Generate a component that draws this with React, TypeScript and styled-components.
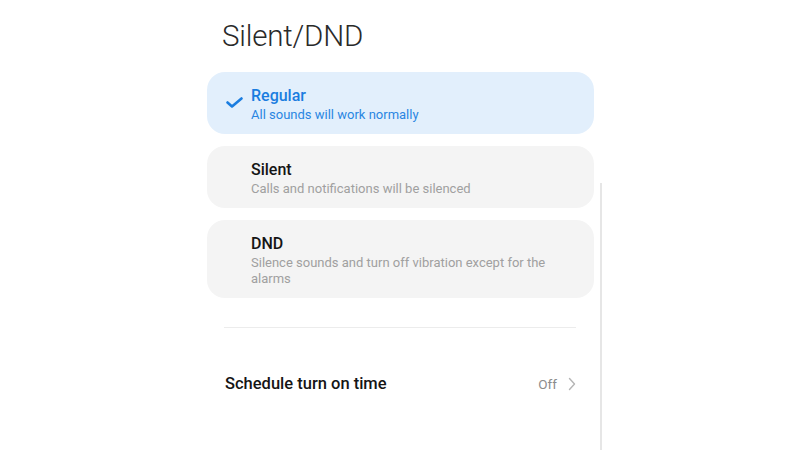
import React from "react";
import styled, { createGlobalStyle } from "styled-components";

const Global = createGlobalStyle`
  html, body { margin: 0; padding: 0; background: #ffffff; }
  body { font-family: Roboto, "Noto Sans", Arial, sans-serif; -webkit-font-smoothing: antialiased; }
`;

const Page = styled.div`
  width: 800px;
  height: 450px;
  overflow: hidden;
  display: flex;
  padding-left: 207px;
  box-sizing: border-box;
  background: #ffffff;
`;

const Content = styled.div`
  width: 387px;
  display: flex;
  flex-direction: column;
`;

const Title = styled.h1`
  margin: 18px 0 18px 15px;
  font-size: 29.5px;
  line-height: 36px;
  font-weight: 300;
  color: #2a2a2a;
  letter-spacing: -0.2px;
`;

const Options = styled.div`
  display: flex;
  flex-direction: column;
  gap: 12px;
`;

const Card = styled.div<{ $active?: boolean }>`
  position: relative;
  border-radius: 18px;
  padding: 14px 24px 11px 44px;
  background: ${(p) => (p.$active ? "#e2effc" : "#f4f4f4")};
`;

const Check = styled.svg`
  position: absolute;
  left: 19px;
  top: 25px;
`;

const OptTitle = styled.div<{ $active?: boolean }>`
  font-size: 16px;
  line-height: 20px;
  font-weight: 500;
  color: ${(p) => (p.$active ? "#1a7de0" : "#151515")};
`;

const OptSub = styled.div<{ $active?: boolean }>`
  font-size: 13px;
  line-height: 16px;
  font-weight: 400;
  margin-top: 1px;
  color: ${(p) => (p.$active ? "#2a86e2" : "#a0a0a0")};
`;

const Divider = styled.div`
  margin: 29px 18px 0 17px;
  height: 1px;
  background: #ececec;
`;

const Row = styled.div`
  display: flex;
  align-items: center;
  justify-content: space-between;
  margin: 46px 18px 0 18px;
  height: 20px;
`;

const RowLabel = styled.div`
  font-size: 16.5px;
  line-height: 20px;
  font-weight: 500;
  color: #151515;
`;

const RowValue = styled.div`
  display: flex;
  align-items: center;
  gap: 11px;
  font-size: 13.5px;
  color: #8c8c8c;
`;

const ScrollTrack = styled.div`
  margin-left: 6px;
  padding-top: 183px;
  display: flex;
  flex-direction: column;
`;

const Thumb = styled.div`
  flex: 1;
  width: 2px;
  background: #e6e6e6;
`;

export default function App() {
  return (
    <>
      <Global />
      <Page>
        <Content>
          <Title>Silent/DND</Title>
          <Options>
            <Card $active>
              <Check width="17" height="11" viewBox="0 0 17 11">
                <path d="M1.5 5.5 L6 9.5 L15.5 1.5" fill="none" stroke="#1a7de0" strokeWidth="2.6" strokeLinecap="round" strokeLinejoin="round" />
              </Check>
              <OptTitle $active>Regular</OptTitle>
              <OptSub $active>All sounds will work normally</OptSub>
            </Card>
            <Card>
              <OptTitle>Silent</OptTitle>
              <OptSub>Calls and notifications will be silenced</OptSub>
            </Card>
            <Card>
              <OptTitle>DND</OptTitle>
              <OptSub>Silence sounds and turn off vibration except for the alarms</OptSub>
            </Card>
          </Options>
          <Divider />
          <Row>
            <RowLabel>Schedule turn on time</RowLabel>
            <RowValue>
              Off
              <svg width="8" height="14" viewBox="0 0 8 14">
                <path d="M1.5 1.5 L6.5 7 L1.5 12.5" fill="none" stroke="#b5b5b5" strokeWidth="1.4" strokeLinecap="round" strokeLinejoin="round" />
              </svg>
            </RowValue>
          </Row>
        </Content>
        <ScrollTrack>
          <Thumb />
        </ScrollTrack>
      </Page>
    </>
  );
}
